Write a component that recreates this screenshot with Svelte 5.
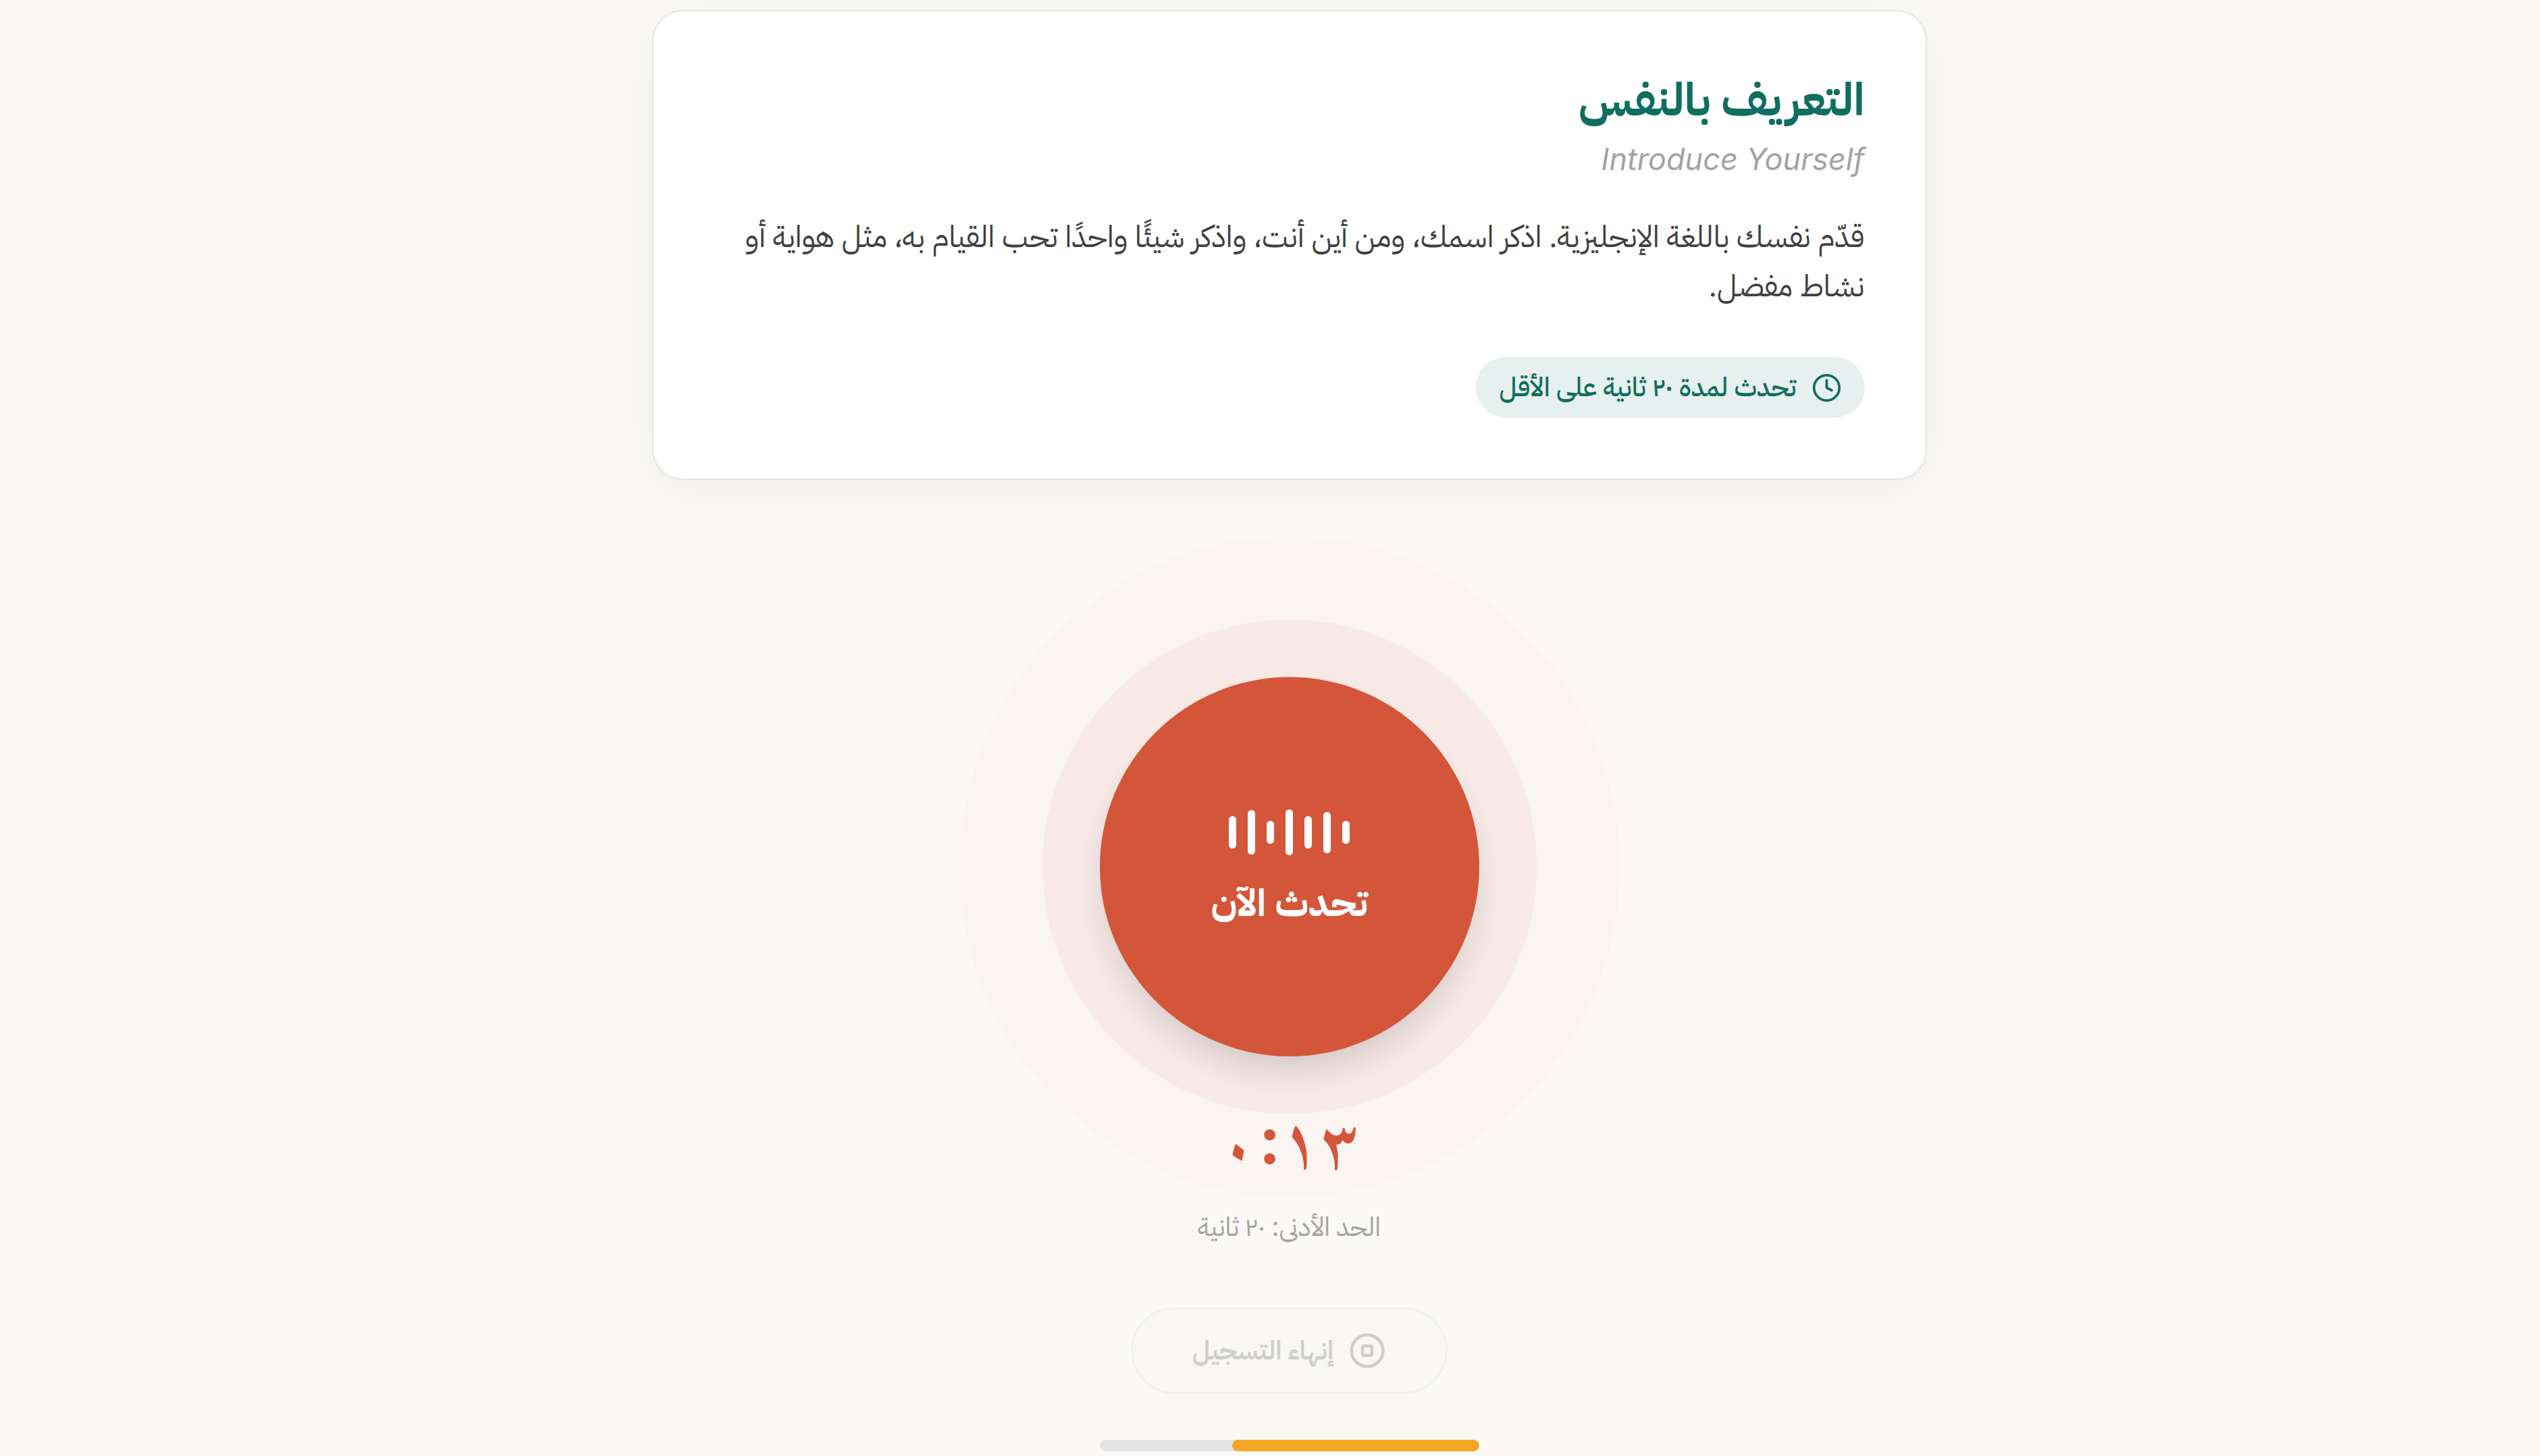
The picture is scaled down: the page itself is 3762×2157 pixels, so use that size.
<script>
  const elapsed = 13;
  const minimum = 20;
  const levels = [34, 61, 48, 68, 34, 66, 48];
  const progress = (elapsed / minimum) * 100;
</script>

<main class="page" dir="rtl" lang="ar">
  <section class="card">
    <h1>التعريف بالنفس</h1>
    <p class="subtitle" lang="en">Introduce Yourself</p>
    <p class="prompt">قدّم نفسك باللغة الإنجليزية. اذكر اسمك، ومن أين أنت، واذكر شيئًا واحدًا تحب القيام به، مثل هواية أو نشاط مفضل.</p>
    <div class="badge">
      <svg class="clock" viewBox="0 0 24 24" fill="none" stroke="currentColor" stroke-width="2" stroke-linecap="round" stroke-linejoin="round" aria-hidden="true">
        <circle cx="12" cy="12" r="10" />
        <path d="M12 6v6l4 2" />
      </svg>
      <span>تحدث لمدة ٢٠ ثانية على الأقل</span>
    </div>
  </section>

  <section class="recorder">
    <button class="speak" type="button">
      <span class="wave" aria-hidden="true">
        {#each levels as level}
          <span class="level" style:height="{level}px"></span>
        {/each}
      </span>
      <span class="speak-label">تحدث الآن</span>
    </button>
    <div class="timer" dir="ltr">٠:١٣</div>
    <p class="minimum">الحد الأدنى: ٢٠ ثانية</p>
    <button class="finish" type="button" disabled>
      <svg class="stop" viewBox="0 0 24 24" fill="none" stroke="currentColor" stroke-width="2" stroke-linecap="round" stroke-linejoin="round" aria-hidden="true">
        <circle cx="12" cy="12" r="10" />
        <rect x="9" y="9" width="6" height="6" rx="1" />
      </svg>
      <span>إنهاء التسجيل</span>
    </button>
    <div class="track" role="progressbar" aria-label="مدة التسجيل" aria-valuenow={elapsed} aria-valuemin="0" aria-valuemax={minimum}>
      <div class="fill" style:width="{progress}%"></div>
    </div>
  </section>
</main>

<style>
  :global(body) {
    background: #faf9f5;
  }

  .page {
    box-sizing: border-box;
    display: flex;
    flex-direction: column;
    align-items: center;
    padding: 15px 0 0 57px;
    overflow: hidden;
    font-family: "IBM Plex Sans Arabic", "Noto Sans Arabic", Inter, "DejaVu Sans", sans-serif;
    color: #404040;
  }

  h1,
  p {
    margin: 0;
  }

  .card {
    box-sizing: border-box;
    width: 100%;
    max-width: 1888px;
    padding: 90px;
    background: #fff;
    border: 2px solid #e5e5e5;
    border-radius: 45px;
    box-shadow: 0 14px 84px rgba(0, 0, 0, 0.05);
  }

  h1 {
    font-size: 67px;
    font-weight: 700;
    line-height: 84px;
    color: #0f6e5f;
  }

  .subtitle {
    margin-top: 11px;
    font-family: Inter, sans-serif;
    font-size: 45px;
    font-style: italic;
    line-height: 68px;
    color: #a3a3a3;
  }

  .prompt {
    margin-top: 45px;
    font-size: 45px;
    line-height: 73px;
  }

  .badge {
    box-sizing: border-box;
    display: flex;
    align-items: center;
    gap: 22px;
    width: fit-content;
    height: 90px;
    margin-top: 68px;
    padding: 0 34px;
    border-radius: 45px;
    background: #e6f0ee;
    color: #0f6e5f;
    font-size: 39px;
    font-weight: 500;
  }

  .clock {
    width: 45px;
    height: 45px;
  }

  .recorder {
    display: flex;
    flex-direction: column;
    align-items: center;
    width: 100%;
    margin-top: 292px;
  }

  button {
    font-family: inherit;
  }

  .speak {
    display: flex;
    flex-direction: column;
    align-items: center;
    justify-content: center;
    gap: 18px;
    width: 562px;
    height: 562px;
    padding: 0;
    border: 0;
    border-radius: 50%;
    background: #d4563a;
    color: #fff;
    box-shadow:
      0 28px 50px -8px rgba(0, 0, 0, 0.15),
      0 0 0 85px #f8eae7,
      0 0 0 208px #faf4f2;
  }

  .wave {
    display: flex;
    align-items: center;
    gap: 17px;
    height: 90px;
  }

  .level {
    width: 11px;
    border-radius: 6px;
    background: #fff;
  }

  .speak-label {
    font-size: 56px;
    font-weight: 700;
    line-height: 84px;
  }

  .timer {
    margin-top: 68px;
    font-family: Inter, "Scheherazade New", "DejaVu Sans", sans-serif;
    font-size: 98px;
    font-weight: 700;
    line-height: 112px;
    height: 112px;
    color: #d4563a;
  }

  .minimum {
    margin-top: 45px;
    font-size: 39px;
    line-height: 56px;
    color: #a3a3a3;
  }

  .finish {
    box-sizing: border-box;
    display: flex;
    align-items: center;
    justify-content: center;
    gap: 22px;
    height: 128px;
    margin-top: 91px;
    padding: 0 88px;
    border: 3px solid #f0f0ee;
    border-radius: 64px;
    background: #f8f7f5;
    color: #cfcecb;
    font-size: 39px;
    font-weight: 600;
  }

  .stop {
    width: 56px;
    height: 56px;
  }

  .track {
    width: 562px;
    height: 17px;
    margin: 68px 0 7px;
    border-radius: 9px;
    background: #e5e5e5;
    overflow: hidden;
  }

  .fill {
    height: 100%;
    border-radius: 9px;
    background: #f5a623;
  }
</style>
